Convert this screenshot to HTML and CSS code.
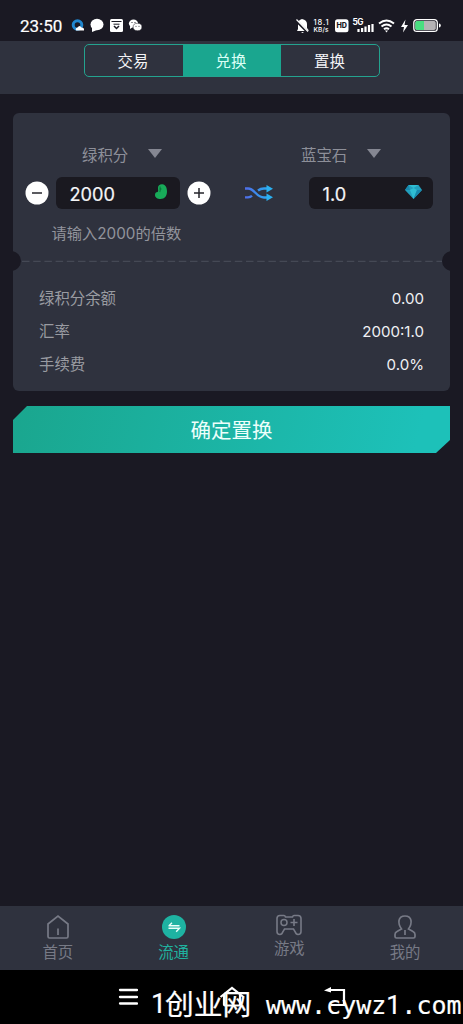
FILE: index.html
```html
<!DOCTYPE html>
<html lang="zh-CN">
<head>
<meta charset="utf-8">
<title>兑换</title>
<link rel="stylesheet" href="styles.css">
</head>
<body>
<div class="screen">
  <div class="status">
    <span class="clock">23:50</span>
    <svg class="status-left" width="74" height="16" viewBox="0 0 74 16">
      <circle cx="6.500" cy="8" r="4.300" fill="none" stroke="#2187cf" stroke-width="3"/>
      <path d="M5 13.500q-1-2.500 1.500-3 2-3 4 0 3 0 2.500 3z" fill="#fff"/>
      <ellipse cx="26" cy="7.500" rx="6.500" ry="5.800" fill="#fff"/><path d="M21 10v5l5-2z" fill="#fff"/>
      <rect x="39" y="2" width="13" height="13" rx="1.500" fill="#fff"/>
      <path d="M40.500 4.500h10M42.500 7.200h6" stroke="#1a1923" stroke-width="1"/><path d="M43 9l2.500 2.500L48 9" fill="none" stroke="#1a1923" stroke-width="1.500"/>
      <ellipse cx="62.500" cy="6.500" rx="4.600" ry="4" fill="#fff"/><path d="M59 9v3l3-2z" fill="#fff"/>
      <ellipse cx="66.500" cy="10" rx="4.400" ry="3.700" fill="#fff" stroke="#1a1923" stroke-width=".5"/>
      <g fill="#1a1923"><circle cx="61" cy="5.500" r=".6"/><circle cx="64" cy="5.500" r=".6"/><circle cx="65" cy="9.200" r=".5"/><circle cx="68" cy="9.200" r=".5"/></g>
    </svg>
    <svg class="status-right" width="148" height="18" viewBox="0 0 148 18">
      <path d="M3 12V7q0-4 4-5 5 1 5 5v4l1.500 2v1H2zM6 15h3l-1.500 1z" fill="#fff"/>
      <path d="M1 3.500l12 12" stroke="#1a1923" stroke-width="2.500"/><path d="M1.500 2.500l11.500 12" stroke="#fff" stroke-width="1.200"/>
      <g class="tiny"><text x="18.500" y="7.800" font-size="7.500" textLength="15">18.1</text><text x="18.500" y="15" font-size="6.500" textLength="15">KB/s</text></g>
      <rect x="40" y="2.200" width="13.500" height="13" rx="2.500" fill="#fff"/><text class="hd" x="41.500" y="11.400" font-size="7.300" textLength="10.500" lengthAdjust="spacingAndGlyphs">HD</text>
      <text class="tiny bold" x="57.500" y="8" font-size="8.300" textLength="11">5G</text>
      <path d="M64 15v-3M67.600 15v-4M71 15V9.500M74.500 15V8M78 15V7" transform="translate(-.5)" stroke="#fff" stroke-width="2.200"/>
      <g fill="none" stroke="#fff" stroke-width="2"><path d="M84 6.500q7.500-6 15 0M86.500 9.500q5-4 10 0M89 12.300q2.500-2 5 0"/></g><path d="M90 13.500h3l-1.500 2z" fill="#fff"/>
      <path d="M110.500 2.500L106 10h3l-1 5.500 5-7.500h-3.500z" fill="#fff"/>
      <rect x="118.800" y="2.600" width="23.500" height="11.800" rx="3.200" fill="#1a1923" stroke="#fff" stroke-width="1.300"/>
      <rect x="120.300" y="4.100" width="20.500" height="8.800" rx="1.700" fill="#b5b3b5"/><path d="M129 4.100h-7q-1.700 0-1.700 1.700v5.400q0 1.700 1.700 1.700h7z" fill="#49de80"/><path d="M144 6.500q1.800 0 1.800 2t-1.800 2z" fill="#fff"/>
    </svg>
  </div>

  <header class="header">
    <div class="segments">
      <span class="segment">交易</span><span class="segment active">兑换</span><span class="segment">置换</span>
    </div>
  </header>

  <main class="main">
    <section class="card">
      <div class="exchange">
        <div class="from">
          <div class="picker"><span>绿积分</span><i class="caret"></i></div>
          <div class="stepper">
            <svg width="24" height="24" viewBox="0 0 24 24"><circle cx="12" cy="12" r="11.500" fill="#fff"/><path d="M7 12h10" stroke="#25252b" stroke-width="1.500"/></svg>
            <div class="field"><span>2000</span>
              <svg width="14" height="18" viewBox="0 0 14 18"><path d="M4 5C4 2 6 1 8.500 1.200c3 .3 4.500 3.300 4.500 7.300 0 4.500-2.300 7.500-6.500 7.500C3.500 16 1 14.500 1 12c0-2 1-2.700 2.500-3 1.200-.3.500-2 .5-4z" fill="#18aa59"/><path d="M6.200 3.500c-.6 2 .8 3.500-.5 5.500" fill="none" stroke="#087b3c" stroke-width="1.100"/><circle cx="6.500" cy="6" r="1" fill="#087b3c"/></svg>
            </div>
            <svg width="24" height="24" viewBox="0 0 24 24"><circle cx="12" cy="12" r="11.500" fill="#fff"/><path d="M7 12h10M12 7v10" stroke="#25252b" stroke-width="1.500"/></svg>
          </div>
        </div>
        <svg class="shuffle" width="28" height="16" viewBox="0 0 28 16">
          <defs><linearGradient id="flow" gradientUnits="userSpaceOnUse" x1="0" y1="0" x2="28" y2="0"><stop offset="0" stop-color="#506ce9"/><stop offset=".55" stop-color="#3596ed"/><stop offset="1" stop-color="#2bb5f1"/></linearGradient></defs>
          <g fill="none" stroke="url(#flow)" stroke-width="2.300"><path d="M0 3.500h3c7 0 8 9 16 9h4M0 12.300h3q2.500 0 4-1.500M13 5.500q2.500-2 6-2h4"/></g><path d="M21.500 0l6.500 3.800-6.500 3.700zM21.500 8.500l6.500 3.800-6.500 3.700z" fill="#2bb1f1"/>
        </svg>
        <div class="to">
          <div class="picker"><span>蓝宝石</span><i class="caret"></i></div>
          <div class="field"><span>1.0</span>
            <svg width="17" height="16" viewBox="0 0 17 16"><path d="M3.500 1h10L17 6l-8.500 9L0 6z" fill="#229fbd"/><path d="M3.500 1L8.500 4l5-3zM5 6l3.500 9L12 6 8.500 4z" fill="#2fbdd2"/><path d="M3.500 1L5 6H0zM12 6l5 0-8.500 9z" fill="#1888ad"/></svg>
          </div>
        </div>
      </div>
      <p class="hint">请输入2000的倍数</p>
      <div class="divider"><svg width="437" height="20" viewBox="0 0 437 20"><path d="M-2 0a10 10 0 0 1 0 20zM439 0a10 10 0 0 0 0 20z" fill="#1a1923"/><path d="M9 10.300h420" stroke="#454955" stroke-width="1.300" stroke-dasharray="7.500 3.700"/></svg></div>
      <dl class="details">
        <div class="row"><dt>绿积分余额</dt><dd>0.00</dd></div>
        <div class="row"><dt>汇率</dt><dd>2000:1.0</dd></div>
        <div class="row"><dt>手续费</dt><dd>0.0%</dd></div>
      </dl>
    </section>
    <div class="confirm">确定置换</div>
  </main>

  <nav class="tabs">
    <div class="tab"><svg width="24" height="26" viewBox="0 0 24 26"><path d="M2 10L12 2l10 8v12.500q0 1.500-1.500 1.500h-17Q2 24 2 22.500zM12 14.500V21" fill="none" stroke="#777a86" stroke-width="1.700"/></svg><span>首页</span></div>
    <div class="tab current"><svg width="24" height="26" viewBox="0 0 24 26"><circle cx="12" cy="13" r="12" fill="#1eb3a2"/><path d="M6.500 11.800h11M10 8.800l-3 3M6.500 14.200h11l-3.300 3.500" fill="none" stroke="#eafffa" stroke-width="1.400"/></svg><span>流通</span></div>
    <div class="tab"><svg width="26" height="22" viewBox="0 0 26 22"><path d="M4 1.500h4q1 0 1.500 1.500h7Q17 1.500 18 1.500h4q3 0 3 3v13q0 3-3 3-2 0-3-3l-1.500-2.500h-9L7 17.500q-1 3-3 3-3 0-3-3v-13q0-3 3-3z" fill="none" stroke="#777a86" stroke-width="1.600"/><circle cx="8" cy="8.500" r="3" fill="none" stroke="#777a86" stroke-width="1.500"/><path d="M18 5v7M14.500 8.500h7" stroke="#777a86" stroke-width="1.600"/></svg><span>游戏</span></div>
    <div class="tab"><svg width="24" height="26" viewBox="0 0 24 26"><path d="M8.500 15C6 11.500 5.500 9.500 6 6.500 6.500 3.500 9 2 12 2s5.500 1.500 6 4.500c.5 3 0 5-2.500 8.500l4.500 2.500q2 1 2 3v2q0 1.500-1.500 1.500h-17Q2 24 2 22.500v-2q0-2 2-3zM12 16v5" fill="none" stroke="#777a86" stroke-width="1.700"/></svg><span>我的</span></div>
  </nav>

  <footer class="system">
    <svg width="20" height="18" viewBox="0 0 20 18"><path d="M2 2h17M2 9h17M2 15.500h17" stroke="#fff" stroke-width="2.300" stroke-linecap="round"/></svg>
    <svg width="26" height="22" viewBox="0 0 26 22"><path d="M1.500 11L13 2l11.500 9M5 9v9.500q0 1 1 1h14q1 0 1-1V9" fill="none" stroke="#fff" stroke-width="2.200"/></svg>
    <svg width="22" height="20" viewBox="0 0 22 20"><path d="M3 3h17v15H7" fill="none" stroke="#fff" stroke-width="2.200"/><path d="M0 3.500L7 0v5.500z" fill="#fff"/></svg>
    <div class="watermark"><span class="wm-one">1</span><span class="wm-han">创业网</span><span class="wm-url">www.cywz<span class="wm-digit">1</span>.com</span></div>
  </footer>
</div>
</body>
</html>
```

FILE: styles.css
```css
* { box-sizing: border-box; }
body { margin: 0; background: #1a1923; font-family: Inter, "Noto Sans CJK SC", sans-serif; }
svg { display: block; flex: none; }
.screen { width: 463px; height: 1024px; display: flex; flex-direction: column; overflow: hidden; background: #1a1923; }

.status { height: 41px; flex: none; display: flex; align-items: flex-start; padding: 17px 20px 0; color: #fff; }
.clock { width: 51px; font-family: Roboto, sans-serif; font-size: 17px; line-height: 19px; -webkit-text-stroke: .2px #fff; }
.status-right { margin-left: auto; }
.tiny { fill: #fff; font-family: Inter, sans-serif; font-weight: 500; }
.bold { font-weight: 700; }
.hd { fill: #1a1923; font-family: Inter, sans-serif; font-weight: 800; }

.header { height: 53px; flex: none; padding-top: 3px; background: #2f323e; }
.segments { width: 296px; height: 33px; margin-left: 83.500px; display: flex; border: 1px solid #24a38f; border-radius: 5px; overflow: hidden; }
.segment { flex: 1; color: #f2f2f5; font-size: 15.400px; line-height: 34px; text-align: center; }
.segment:first-child { text-indent: -1px; }
.segment.active { background: #1aa68f; color: #d9fff5; text-indent: -1px; }

.main { flex: 1; padding: 19px 13px 0; }
.card { height: 278px; background: #2f323e; border-radius: 6px; }
.exchange { display: flex; padding: 31px 0 0 12px; }
.picker { height: 22px; display: flex; align-items: center; color: #8d8f99; font-size: 15.400px; line-height: 22px; }
.picker span { padding-top: 1px; }
.from .picker { padding-left: 57px; }
.to .picker { margin-left: -7.500px; }
.caret { margin: 0 0 3px 19.500px; border: 7px solid transparent; border-top: 9px solid #858792; border-bottom: 0; }
.stepper { display: flex; align-items: center; gap: 6.500px; margin-top: 11px; }
.field { width: 124.500px; height: 32px; display: flex; justify-content: space-between; align-items: center; padding: 2px 12px 0 14px; border-radius: 6px; background: #1a1920; color: #f5f5f7; font-size: 18.200px; line-height: 30px; -webkit-text-stroke: .2px #f5f5f7; }
.field svg { margin-top: -5px; }
.shuffle { margin: 41px 0 0 34.500px; }
.to { margin-left: 35.500px; }
.to .field { margin-top: 11px; padding-right: 11px; }
.hint { margin: 14px 0 0 38.500px; color: #92949c; font-size: 15.250px; line-height: 22px; }
.divider { margin-top: 6px; }
.details { margin: 10px 26px 0; }
.row { height: 33px; display: flex; justify-content: space-between; font-size: 15.400px; line-height: 33px; }
.row dt { padding-top: .5px; color: #999ba1; }
.row dd { margin: 0; padding-top: .5px; color: #f0f0f4; font-size: 15.100px; }
.confirm { height: 47px; margin-top: 15px; background: linear-gradient(105deg, #1aa68e, #1dc1b9 92%); clip-path: polygon(14px 0, 100% 0, 100% 34px, calc(100% - 14px) 100%, 0 100%, 0 14px); color: #edfffb; font-size: 20.500px; line-height: 50px; text-align: center; }

.tabs { height: 64px; flex: none; display: flex; padding-top: 8px; background: #2f323e; }
.tab { flex: 1; display: flex; flex-direction: column; align-items: center; gap: 2px; color: #777a86; font-size: 15.400px; line-height: 22px; }
.tab.current { color: #20b29f; }

.system { position: relative; height: 54px; flex: none; display: flex; align-items: flex-start; padding: 18px 0 0 118px; background: #000; }
.system svg:nth-of-type(2) { margin: -2px 0 0 81px; }
.system svg:nth-of-type(3) { margin: -1px 0 0 79px; }
.watermark { position: absolute; left: 151px; top: 14px; display: flex; color: #fff; white-space: nowrap; line-height: 38px; -webkit-text-stroke: .2px #fff; }
.wm-one { width: 14px; padding-top: 1px; font: 27px/38px Roboto, sans-serif; }
.wm-han { font: 400 28.800px/38px "Noto Sans CJK SC", sans-serif; }
.wm-url { margin-left: 14.500px; padding-top: 3px; font: 25px/38px "DejaVu Sans Mono", monospace; }
.wm-digit { display: inline-block; width: 15px; font: 26px/30px Roboto, sans-serif; }
```
